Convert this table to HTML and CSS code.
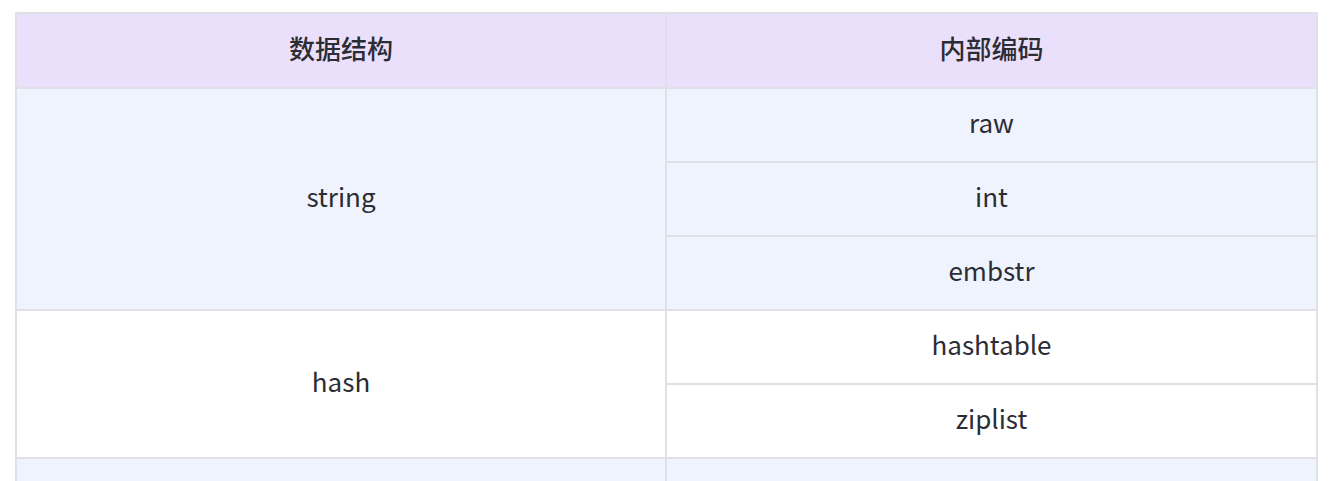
FILE: index.html
```html
<!DOCTYPE html>
<html lang="zh">
<head>
<meta charset="utf-8">
<title>数据结构与内部编码</title>
<link rel="stylesheet" href="styles.css">
</head>
<body>
<table class="enc-table">
  <thead>
    <tr>
      <th class="col-left">数据结构</th>
      <th class="col-right">内部编码</th>
    </tr>
  </thead>
  <tbody>
    <tr class="group-odd">
      <td rowspan="3">string</td>
      <td>raw</td>
    </tr>
    <tr class="group-odd"><td>int</td></tr>
    <tr class="group-odd"><td>embstr</td></tr>
    <tr class="group-even">
      <td rowspan="2">hash</td>
      <td>hashtable</td>
    </tr>
    <tr class="group-even"><td>ziplist</td></tr>
    <tr class="group-odd">
      <td rowspan="2">list</td>
      <td>linkedlist</td>
    </tr>
    <tr class="group-odd"><td>ziplist</td></tr>
  </tbody>
</table>
</body>
</html>
```
FILE: styles.css
```css
html, body {
  margin: 0;
  padding: 0;
  background: #ffffff;
}

body {
  font-family: "Noto Sans CJK SC", "Noto Sans", sans-serif;
  color: #2c2c34;
}

.enc-table {
  margin: 12px 0 0 15px;
  width: 1303px;
  border-collapse: separate;
  border-spacing: 0;
  border-top: 2px solid #e0e0e8;
  border-left: 2px solid #e0e0e8;
  table-layout: fixed;
}

.enc-table th,
.enc-table td {
  padding: 0 0 6px 0;
  text-align: center;
  vertical-align: middle;
  border-right: 2px solid #e0e0e8;
  border-bottom: 2px solid #e0e0e8;
  font-size: 26px;
  line-height: 30px;
}

.enc-table th {
  height: 75px;
  background: #ebe0fc;
  font-weight: 500;
  box-sizing: border-box;
}

.col-left { width: 650px; }
.col-right { width: 651px; }

.enc-table td {
  height: 74px;
  box-sizing: border-box;
  font-weight: 400;
}

.group-odd td {
  background: #eff3fe;
}

.group-even td {
  background: #ffffff;
}
```
